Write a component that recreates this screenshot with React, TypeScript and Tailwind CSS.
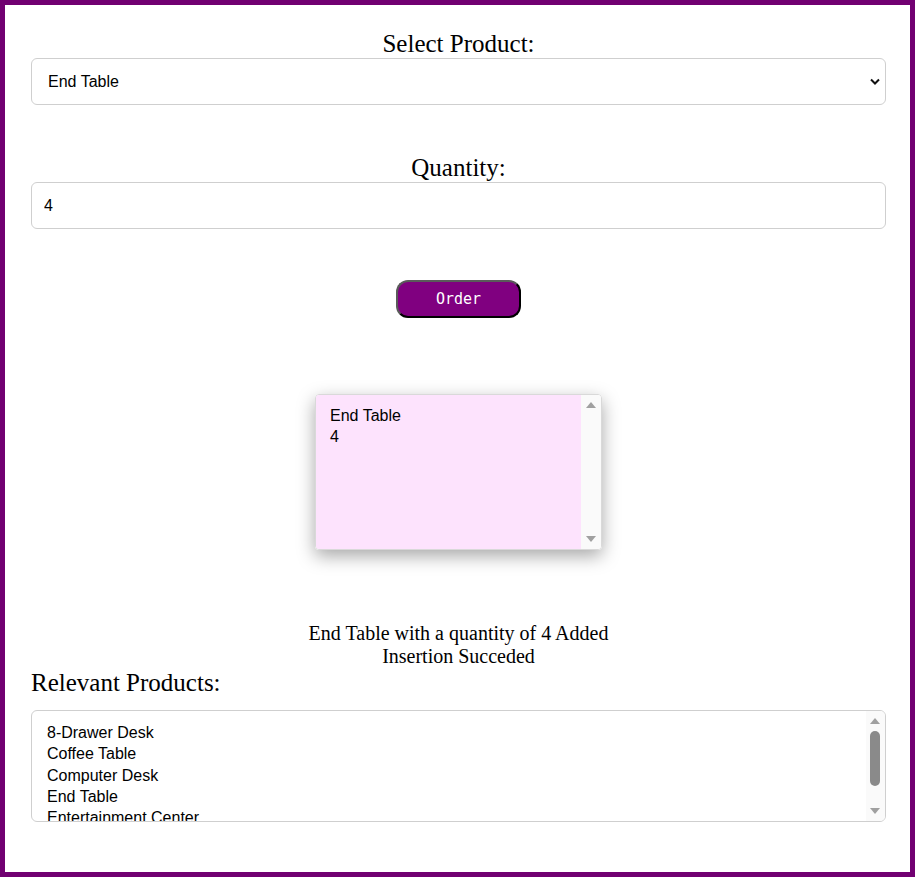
import { useState } from 'react';

const products = [
  '8-Drawer Desk',
  'Coffee Table',
  'Computer Desk',
  'End Table',
  'Entertainment Center',
];

// drawn scroll track, arrows + optional thumb
function ScrollTrack({ thumb = false, className = '' }: { thumb?: boolean; className?: string }) {
  return (
    <div className={`flex flex-col items-center ${className}`}>
      <svg width="10" height="6" viewBox="0 0 10 6" className="shrink-0">
        <path d="M0 6 L5 0 L10 6 Z" fill="#a0a0a0" />
      </svg>
      <div className="flex flex-1 flex-col items-center pt-[7px]">
        {thumb && <div className="h-[55px] w-[10px] rounded-full bg-[#8a8a8a]" />}
      </div>
      <svg width="10" height="6" viewBox="0 0 10 6" className="shrink-0">
        <path d="M0 0 L10 0 L5 6 Z" fill="#a0a0a0" />
      </svg>
    </div>
  );
}

export default function App() {
  const [product, setProduct] = useState('End Table');
  const [qty, setQty] = useState('4');

  return (
    <div className="h-[877px] border-[5px] border-[#710071] bg-white pl-[26px] pr-[24px] pt-[24px] font-['Liberation_Serif',serif] text-black">
      {/* product picker */}
      <div className="text-center text-[25px] leading-[29px]">Select Product:</div>
      <div className="relative">
        <select
          value={product}
          onChange={e => setProduct(e.target.value)}
          className="h-[47px] w-full appearance-none rounded-[6px] border border-[#cfcfcf] bg-white pl-4 font-['Liberation_Sans',Arial,sans-serif] text-[16px] outline-none"
        >
          {products.map(p => (
            <option key={p}>{p}</option>
          ))}
        </select>
        <svg
          className="pointer-events-none absolute right-[6px] top-[20px]"
          width="10"
          height="7"
          viewBox="0 0 10 7"
        >
          <path d="M1 1.5 L5 5.5 L9 1.5" fill="none" stroke="#111" strokeWidth="2" />
        </svg>
      </div>

      {/* quantity */}
      <div className="mt-[48px] text-center text-[25px] leading-[29px]">Quantity:</div>
      <input
        value={qty}
        onChange={e => setQty(e.target.value)}
        className="h-[47px] w-full rounded-[6px] border border-[#cfcfcf] bg-white pl-3 font-['Liberation_Sans',Arial,sans-serif] text-[16px] outline-none"
      />

      <div className="mt-[51px] flex justify-center">
        <button className="h-[38px] w-[125px] rounded-[12px] border-2 border-b-black border-l-[#5a5a5a] border-r-black border-t-[#5a5a5a] bg-[#800080] font-['DejaVu_Sans_Mono',monospace] text-[15px] text-white">
          Order
        </button>
      </div>

      {/* last order */}
      <div className="mt-[76px] flex justify-center">
        <div className="flex h-[156px] w-[287px] overflow-hidden rounded-[4px] border border-[#d9d9d9] shadow-[0_6px_18px_rgba(0,0,0,0.35)]">
          <textarea
            readOnly
            value={`${product}\n${qty}`}
            className="flex-1 resize-none overflow-hidden bg-[#fde3fd] pl-[14px] pt-[10px] font-['Liberation_Sans',Arial,sans-serif] text-[16px] leading-[21px] outline-none"
          />
          <ScrollTrack className="w-[20px] bg-[#fafafa] py-[7px]" />
        </div>
      </div>

      <div className="mt-[72px] text-center text-[20px] leading-[23px]">
        <div>End Table with a quantity of 4 Added</div>
        <div>Insertion Succeded</div>
      </div>

      <div className="text-[25px] leading-[29px]">Relevant Products:</div>
      <div className="mt-[13px] flex h-[112px] overflow-hidden rounded-[6px] border border-[#cfcfcf]">
        <div className="flex-1 overflow-hidden pl-[15px] pt-[11px] font-['Liberation_Sans',Arial,sans-serif] text-[16px] leading-[21.3px]">
          {products.map(p => (
            <div key={p}>{p}</div>
          ))}
        </div>
        <ScrollTrack thumb className="w-[19px] bg-[#fafafa] py-[7px] pr-[1px]" />
      </div>
    </div>
  );
}
